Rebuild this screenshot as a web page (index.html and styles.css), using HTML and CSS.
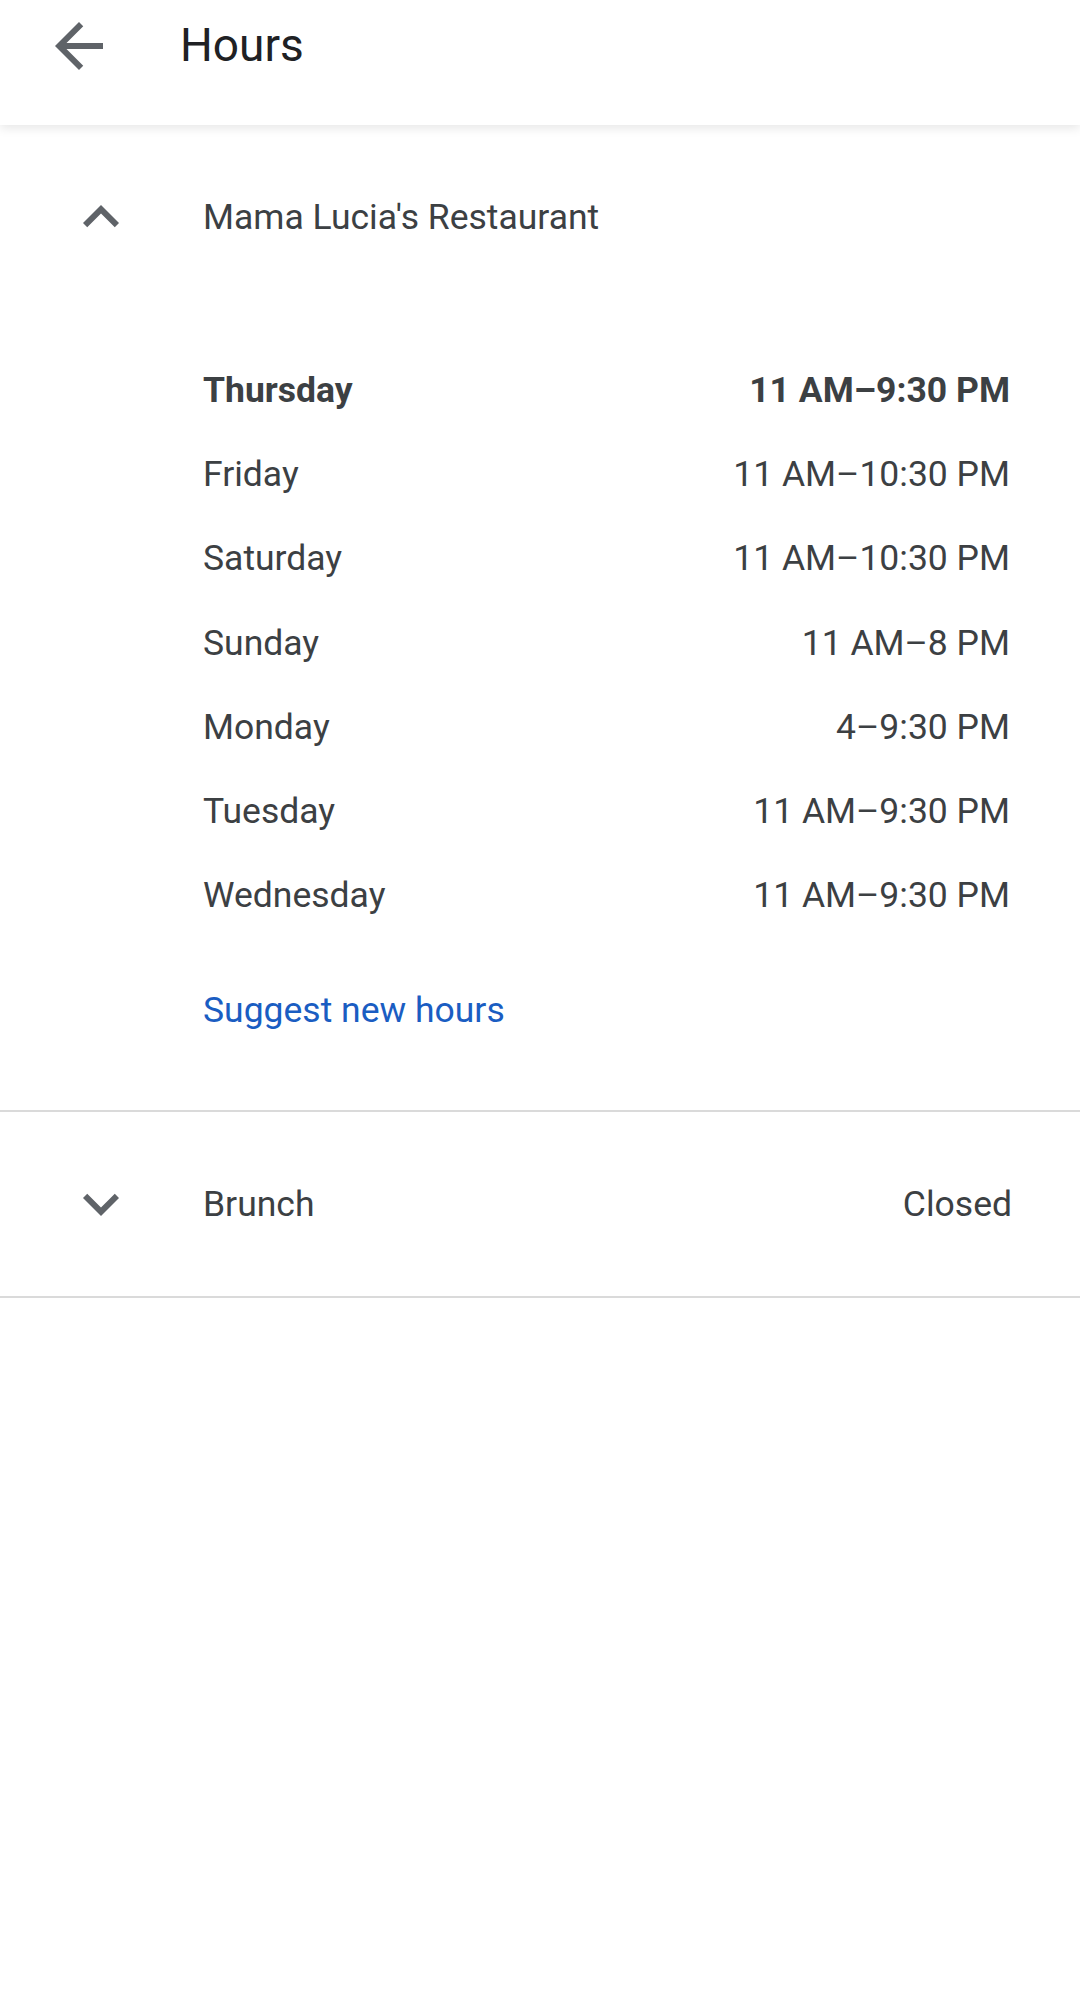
FILE: index.html
```html
<!DOCTYPE html>
<html lang="en">
<head>
<meta charset="utf-8">
<title>Hours</title>
<link rel="stylesheet" href="styles.css">
</head>
<body>
<header class="topbar">
  <svg class="icon back" viewBox="0 0 24 24" aria-hidden="true"><path d="M20 11H7.83l5.59-5.59L12 4l-8 8 8 8 1.41-1.41L7.83 13H20v-2z"/></svg>
  <h1 class="title">Hours</h1>
</header>
<main class="content">
  <section class="group open">
    <div class="group-head">
      <svg class="icon chev" viewBox="0 0 24 24" aria-hidden="true"><path d="M12 8l-6 6 1.41 1.41L12 10.83l4.59 4.58L18 14z"/></svg>
      <span class="group-name">Mama Lucia's Restaurant</span>
    </div>
    <div class="days">
      <div class="day today"><span>Thursday</span><span>11 AM–9:30 PM</span></div>
      <div class="day"><span>Friday</span><span>11 AM–10:30 PM</span></div>
      <div class="day"><span>Saturday</span><span>11 AM–10:30 PM</span></div>
      <div class="day"><span>Sunday</span><span>11 AM–8 PM</span></div>
      <div class="day"><span>Monday</span><span>4–9:30 PM</span></div>
      <div class="day"><span>Tuesday</span><span>11 AM–9:30 PM</span></div>
      <div class="day"><span>Wednesday</span><span>11 AM–9:30 PM</span></div>
    </div>
    <a class="suggest" href="#">Suggest new hours</a>
  </section>
  <section class="group closed-group">
    <div class="group-head collapsed">
      <svg class="icon chev" viewBox="0 0 24 24" aria-hidden="true"><path d="M16.59 8.59L12 13.17 7.41 8.59 6 10l6 6 6-6z"/></svg>
      <span class="group-name">Brunch</span>
      <span class="status">Closed</span>
    </div>
  </section>
</main>
</body>
</html>
```

FILE: styles.css
```css
html, body {
  margin: 0;
  padding: 0;
  background: #ffffff;
}

body {
  font-family: Roboto, "Noto Sans", "Liberation Sans", sans-serif;
  color: #3c4043;
  width: 1080px;
  min-height: 1993px;
}

.topbar {
  box-sizing: border-box;
  height: 125px;
  display: flex;
  align-items: flex-start;
  padding: 10px 0 0 43px;
  background: #fff;
  box-shadow: 0 3px 10px rgba(0, 0, 0, 0.10);
  position: relative;
  z-index: 1;
}

.icon {
  width: 72px;
  height: 72px;
  fill: #5f6368;
  flex: none;
}

.title {
  margin: 7px 0 0 65px;
  font-size: 46px;
  line-height: 56px;
  font-weight: 400;
  color: #202124;
}

.content {
  display: flex;
  flex-direction: column;
}

.group.open {
  padding-top: 56px;
  padding-bottom: 78px;
  display: flex;
  flex-direction: column;
}

.group-head {
  display: flex;
  align-items: center;
  padding-left: 65px;
  padding-right: 68px;
}

.group-name {
  margin-left: 66px;
  font-size: 35.5px;
  line-height: 44px;
  color: #3c4043;
  flex: 1;
}

.days {
  margin-top: 95px;
  display: flex;
  flex-direction: column;
  padding-left: 203px;
  padding-right: 70px;
}

.day {
  height: 84.2px;
  display: flex;
  align-items: center;
  justify-content: space-between;
  font-size: 35.5px;
  line-height: 44px;
  color: #3c4043;
}

.day.today {
  font-weight: 700;
}

.suggest {
  margin: 51px 0 0 203px;
  align-self: flex-start;
  font-size: 35.5px;
  line-height: 44px;
  color: #1a5dc2;
  text-decoration: none;
}

.closed-group {
  border-top: 2px solid #dadada;
  border-bottom: 2px solid #dadada;
}

.group-head.collapsed {
  height: 184px;
}

.status {
  font-size: 35.5px;
  line-height: 44px;
  color: #3c4043;
}
```
